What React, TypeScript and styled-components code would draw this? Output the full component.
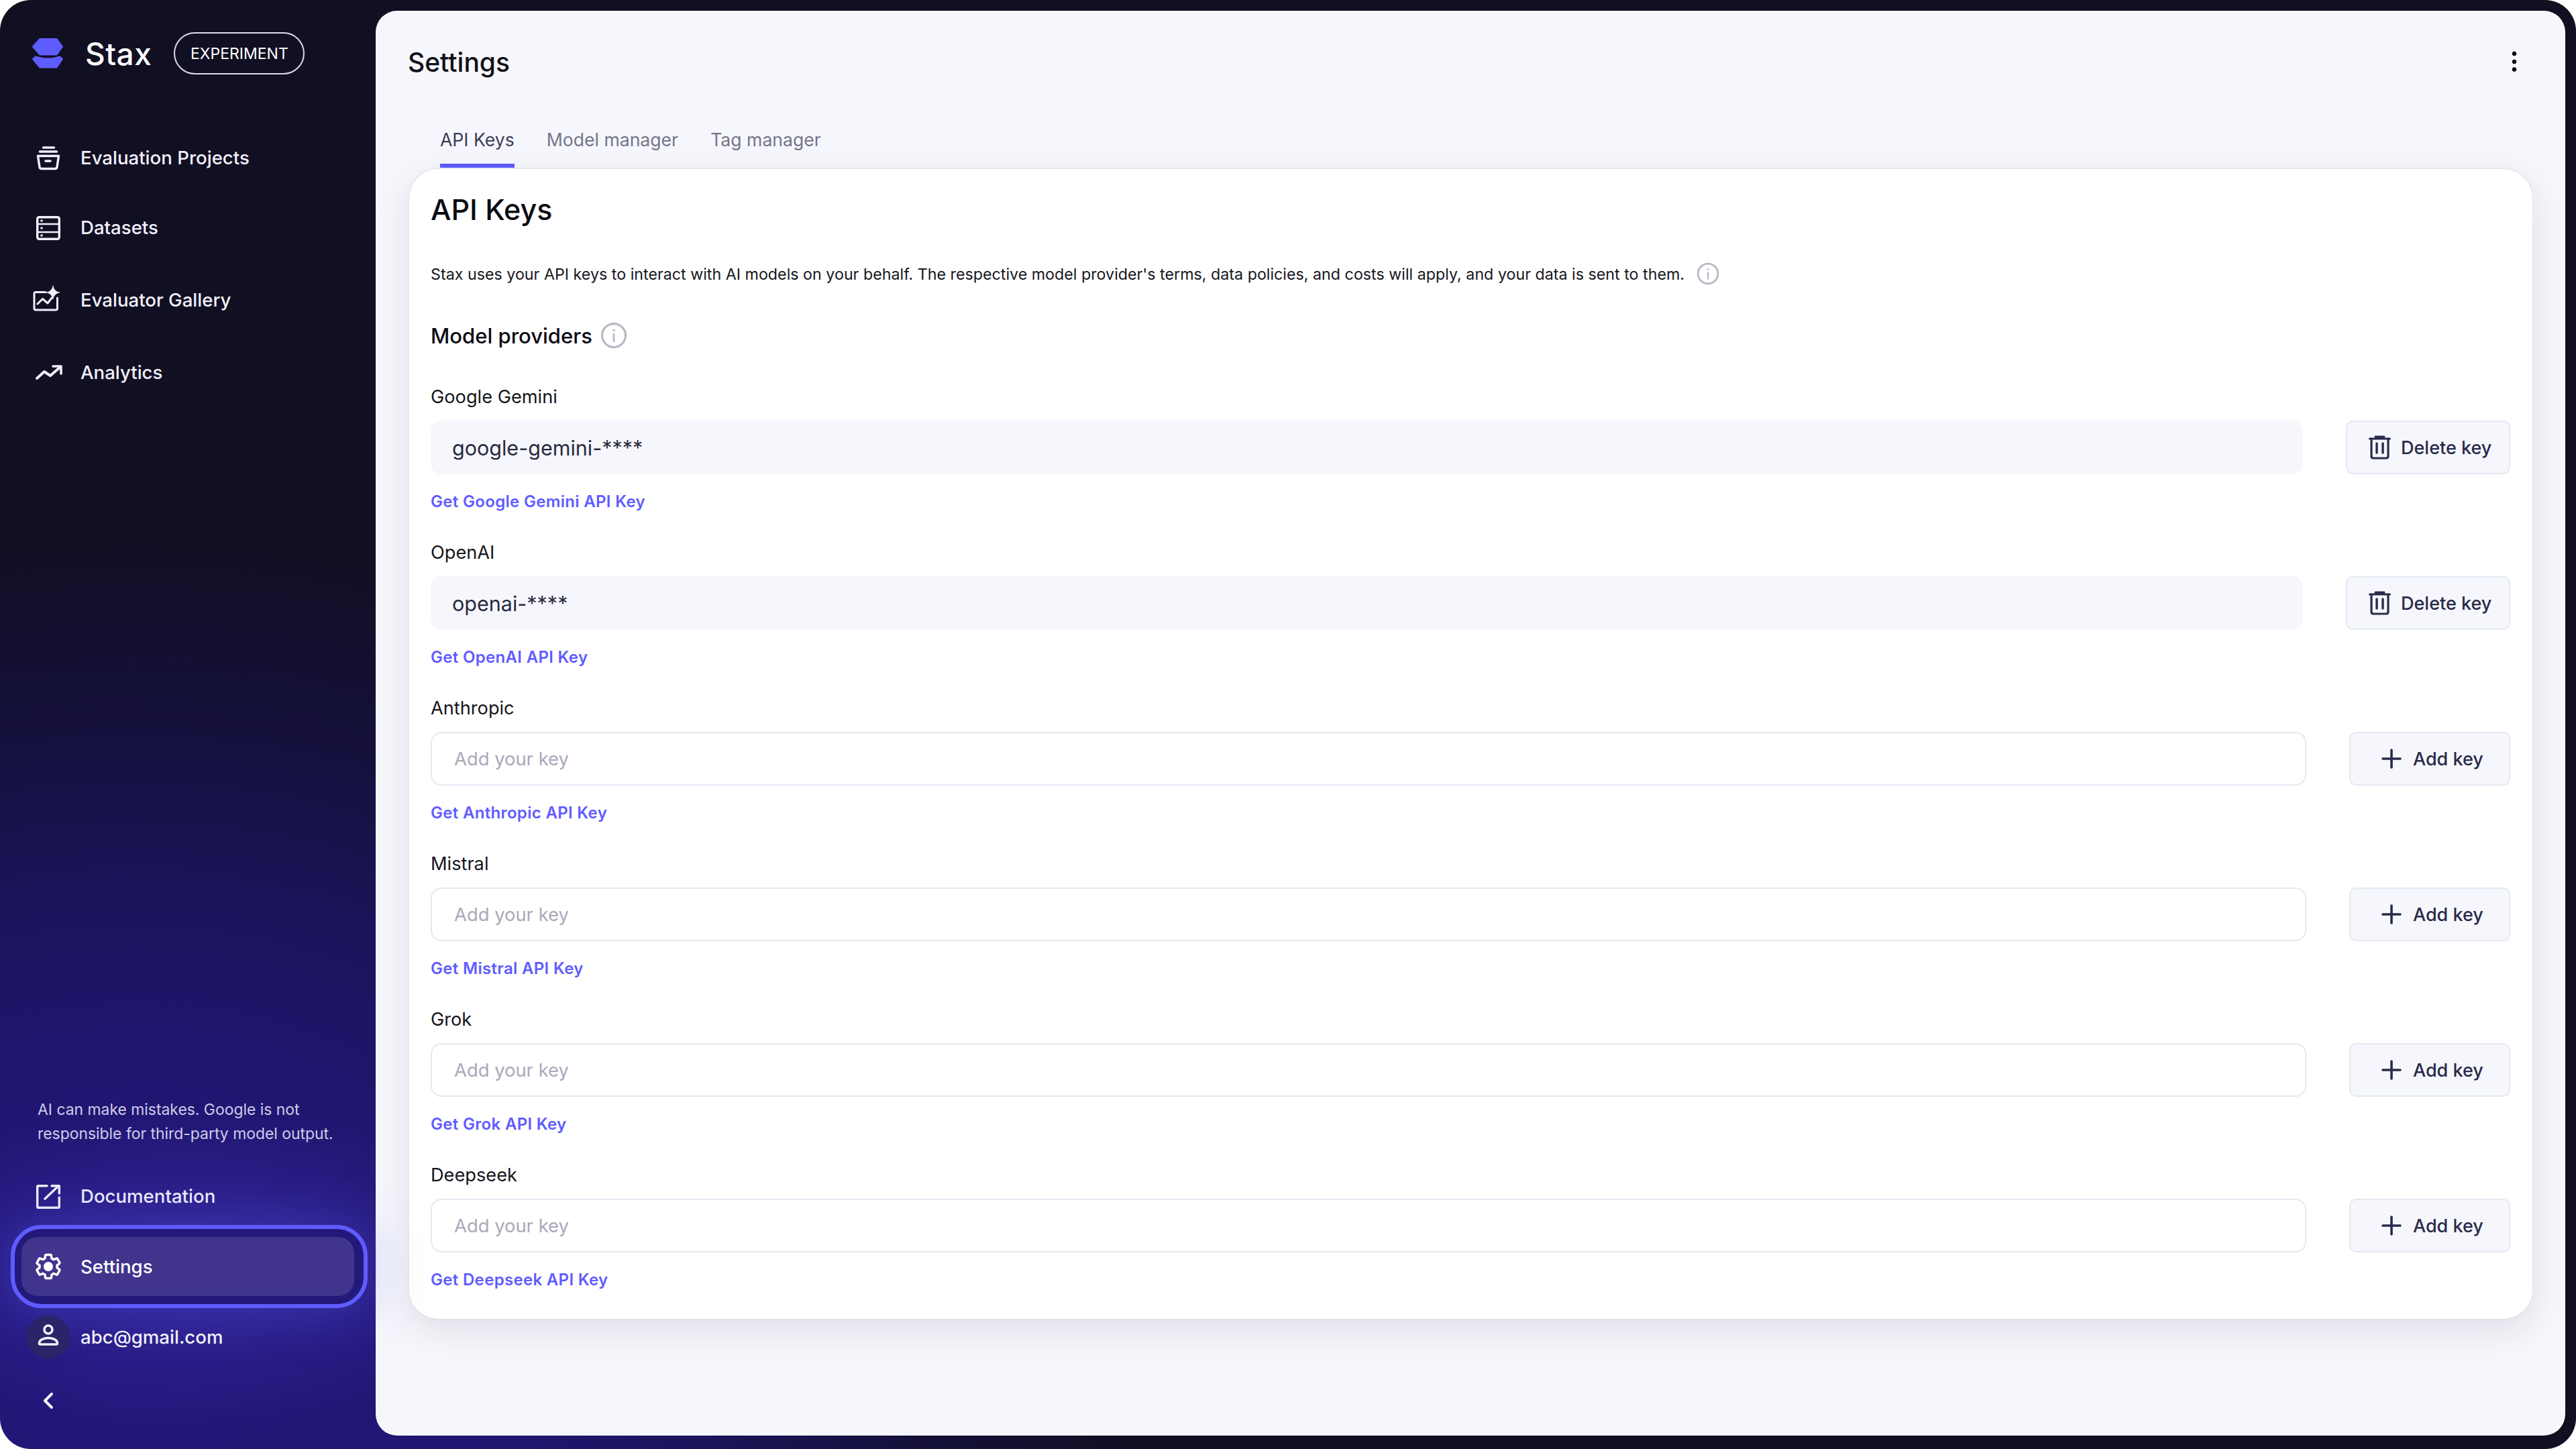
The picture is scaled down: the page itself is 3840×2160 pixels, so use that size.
import { Fragment, type ReactNode } from 'react';
import styled, { createGlobalStyle } from 'styled-components';

const GlobalStyle = createGlobalStyle`
  html, body {
    margin: 0;
    padding: 0;
    background: #ffffff;
    font-family: Inter, "Liberation Sans", sans-serif;
  }
  * {
    box-sizing: border-box;
  }
`;

const Frame = styled.div`
  display: flex;
  width: 3840px;
  height: 2160px;
  border-radius: 46px;
  background:
    radial-gradient(ellipse 520px 240px at 280px 1890px, #33279a 0%, rgba(51, 39, 154, 0) 100%),
    radial-gradient(ellipse 1500px 1260px at 200px 2050px, #22177a 0%, #201670 38%, #1b1459 58%, #14103a 78%, #110f22 100%);
`;

const Sidebar = styled.aside`
  position: relative;
  z-index: 2;
  display: flex;
  flex-direction: column;
  flex: 0 0 560px;
  padding-top: 48px;
  padding-bottom: 48px;
  color: #ffffff;
`;

const LogoRow = styled.div`
  display: flex;
  align-items: center;
  height: 63px;
  padding-left: 40px;
`;

const BrandName = styled.span`
  margin-left: 23px;
  font-size: 46px;
  font-weight: 500;
  letter-spacing: 0.5px;
`;

const Badge = styled.span`
  display: flex;
  align-items: center;
  justify-content: center;
  width: 195px;
  height: 63px;
  margin-left: 33px;
  border: 2px solid #dcdce4;
  border-radius: 32px;
  font-size: 23px;
`;

const NavList = styled.nav`
  display: grid;
  grid-template-rows: 104px 108px 108px 88px;
  margin-top: 80px;
`;

const BottomNav = styled.nav`
  display: grid;
  grid-template-rows: 105px 105px 88px;
`;

const NavItem = styled.div<{ $focused?: boolean }>`
  position: relative;
  z-index: 0;
  display: flex;
  align-items: center;
  gap: 24px;
  width: 496px;
  height: 88px;
  margin-left: 32px;
  padding-left: 16px;
  font-size: 27.6px;
  font-weight: 500;
  color: ${({ $focused }) => ($focused ? '#ffffff' : '#f1effc')};

  ${({ $focused }) =>
    $focused &&
    `
    &::before {
      content: '';
      position: absolute;
      inset: 0;
      z-index: -1;
      border-radius: 24px;
      background: #40348c;
    }
    &::after {
      content: '';
      position: absolute;
      inset: -18px -20px -18px -16px;
      z-index: -2;
      border: 6px solid #5f5cff;
      border-radius: 46px;
      background: #23197a;
      box-shadow: 0 0 80px 6px rgba(95, 92, 255, 0.28);
    }
  `}
`;

const Avatar = styled.span`
  display: flex;
  align-items: center;
  justify-content: center;
  flex: 0 0 64px;
  height: 64px;
  margin: 0 -8px;
  border-radius: 50%;
  background: #2a2468;
`;

const Disclaimer = styled.p`
  margin: auto 0 31px 56px;
  font-size: 22.9px;
  line-height: 36px;
  color: #cfcdea;
`;

const CollapseButton = styled.div`
  display: flex;
  width: 48px;
  height: 48px;
  margin: 27px 0 0 48px;
`;

const Main = styled.main`
  display: flex;
  flex-direction: column;
  flex: 1;
  margin: 16px 16px 20px 0;
  border-radius: 32px;
  background: #f6f7fc;
`;

const Header = styled.header`
  display: flex;
  align-items: center;
  justify-content: space-between;
  height: 48px;
  margin-top: 52px;
  padding: 0 68px 0 48px;
`;

const PageTitle = styled.h1`
  margin: 0;
  font-size: 39px;
  font-weight: 500;
  color: #111118;
`;

const Tabs = styled.div`
  display: flex;
  gap: 48px;
  height: 59px;
  margin: 75px 0 0 96px;
`;

const Tab = styled.div<{ $active?: boolean }>`
  height: 59px;
  border-bottom: 6px solid ${({ $active }) => ($active ? '#5f5cff' : 'transparent')};
  font-size: 26.6px;
  line-height: 35px;
  color: ${({ $active }) => ($active ? '#3c3c5a' : '#74748a')};
`;

const Card = styled.section`
  margin: 0 47px 0 48px;
  padding: 30px 33px 40px 32px;
  border: 2px solid #e8e8ee;
  border-bottom-color: #e2e2e8;
  border-radius: 46px;
  background: #ffffff;
  box-shadow: 0 16px 50px rgba(30, 30, 60, 0.1);
`;

const CardTitle = styled.h2`
  margin: 0;
  font-size: 43px;
  line-height: 60px;
  font-weight: 500;
  color: #0b0b12;
`;

const Description = styled.div`
  display: flex;
  align-items: center;
  gap: 18px;
  height: 36px;
  margin-top: 48px;
  font-size: 23.25px;
  color: #17171f;
`;

const SectionTitle = styled.h3`
  display: flex;
  align-items: center;
  gap: 12px;
  height: 44px;
  margin: 52px 0 0;
  font-size: 31px;
  font-weight: 500;
  color: #0b0b12;
`;

const ProviderList = styled.div`
  display: flex;
  flex-direction: column;
  gap: 39px;
  margin-top: 51px;
`;

const Provider = styled.div`
  display: flex;
  flex-direction: column;
`;

const ProviderName = styled.label`
  height: 38px;
  margin-bottom: 16px;
  font-size: 27.2px;
  line-height: 38px;
  color: #15151c;
`;

const KeyRow = styled.div`
  display: flex;
  gap: 64px;
  height: 80px;
`;

const KeyField = styled.div<{ $filled?: boolean }>`
  display: flex;
  align-items: center;
  flex: 1;
  padding-left: ${({ $filled }) => ($filled ? '30px' : '33px')};
  border: 2px solid ${({ $filled }) => ($filled ? '#f6f7fc' : '#e4e8f2')};
  border-radius: 16px;
  background: ${({ $filled }) => ($filled ? '#f6f7fc' : '#ffffff')};
  font-size: ${({ $filled }) => ($filled ? '30.5px' : '27.4px')};
  color: ${({ $filled }) => ($filled ? '#2a2a40' : '#a9a9b9')};
`;

const KeyButton = styled.button<{ $add?: boolean }>`
  display: flex;
  align-items: center;
  gap: ${({ $add }) => ($add ? '16px' : '14px')};
  width: ${({ $add }) => ($add ? '240px' : '245px')};
  padding: 0 0 0 ${({ $add }) => ($add ? '45px' : '30px')};
  border: 2px solid #e4e8f2;
  border-radius: 10px;
  background: #f6f7fc;
  font-family: inherit;
  font-size: 27px;
  font-weight: 500;
  color: #2a2a4a;
`;

const ProviderLink = styled.a`
  height: 36px;
  margin-top: 23px;
  font-size: 24px;
  font-weight: 600;
  letter-spacing: 0.32px;
  line-height: 36px;
  color: #5f5cff;
`;

const Glyph = styled.svg`
  display: block;
  flex: none;
`;

const NavIcon = ({ children }: { children: ReactNode }) => (
  <Glyph width="48" height="48" viewBox="0 0 48 48" fill="none" stroke="currentColor" strokeLinecap="round" strokeLinejoin="round">
    {children}
  </Glyph>
);

const StaxLogo = () => (
  <Glyph width="64" height="60" viewBox="0 0 64 60" fill="#5f5cff" stroke="#5f5cff" strokeWidth="2" strokeLinejoin="round">
    <path d="M19.5 8 H44.5 L53 19.5 L44.5 31.5 H19.5 L9 19.5 Z" />
    <path d="M13 34.5 Q32 40.5 49.5 34.5 L53 38 L44.5 50.5 H19.5 L9 38 Z" />
  </Glyph>
);

const ProjectsIcon = () => (
  <NavIcon>
    <path d="M16.5 9 H32.5 M11.5 15 H36.5" strokeWidth="3.6" />
    <path d="M8.5 21.5 H39.5 L37 38 Q36.7 40.5 34 40.5 H14 Q11.3 40.5 11 38 Z" strokeWidth="3.4" />
    <path d="M20 29 H27" strokeWidth="3.6" />
  </NavIcon>
);

const DatasetsIcon = () => (
  <NavIcon>
    <rect x="7.7" y="8.7" width="32.6" height="32.6" rx="2.5" strokeWidth="3.4" />
    <path d="M8 19 H40 M8 31 H40" strokeWidth="2.4" />
    <circle cx="14" cy="14" r="1.8" fill="currentColor" stroke="none" />
    <circle cx="14" cy="25" r="1.8" fill="currentColor" stroke="none" />
    <circle cx="14" cy="36" r="1.8" fill="currentColor" stroke="none" />
  </NavIcon>
);

const GalleryIcon = () => (
  <NavIcon>
    <path d="M20 12.5 H5.5 Q3 12.5 3 15 V36.5 Q3 39 5.5 39 H35 Q37.5 39 37.5 36.5 V21" strokeWidth="3" />
    <path d="M8 30 L15.5 22.5 L23 29 L30 20" strokeWidth="3" />
    <path d="M31 3 Q32.5 11.5 41 13 Q32.5 14.5 31 23 Q29.5 14.5 21 13 Q29.5 11.5 31 3Z" fill="currentColor" stroke="currentColor" strokeWidth="0.6" />
  </NavIcon>
);

const AnalyticsIcon = () => (
  <NavIcon>
    <path d="M7 33 L18 23 L27 29 L42 16" strokeWidth="4" />
    <path d="M31 15 H43 V26" strokeWidth="3.6" />
  </NavIcon>
);

const DocsIcon = () => (
  <NavIcon>
    <path d="M22 8.7 H9 Q7.7 8.7 7.7 10 V40 Q7.7 41.3 9 41.3 H39 Q40.3 41.3 40.3 40 V26" strokeWidth="3.4" />
    <path d="M19 28 L38.5 9.5" strokeWidth="3.4" />
    <path d="M29 8.7 H40.3 V20" strokeWidth="3.4" />
  </NavIcon>
);

const GearIcon = () => (
  <Glyph width="48" height="48" viewBox="-1.7 -1.7 27.4 27.4" fill="none" stroke="currentColor" strokeWidth="2">
    <path d="M19.43 12.98c.04-.32.07-.64.07-.98 0-.34-.03-.66-.07-.98l2.11-1.65c.19-.15.24-.42.12-.64l-2-3.46c-.09-.16-.26-.25-.44-.25-.06 0-.12.01-.17.03l-2.49 1c-.52-.4-1.08-.73-1.69-.98l-.38-2.65C14.46 2.18 14.25 2 14 2h-4c-.25 0-.46.18-.49.42l-.38 2.65c-.61.25-1.17.59-1.69.98l-2.49-1c-.06-.02-.12-.03-.18-.03-.17 0-.34.09-.43.25l-2 3.46c-.13.22-.07.49.12.64l2.11 1.65c-.04.32-.07.65-.07.98 0 .33.03.66.07.98l-2.11 1.65c-.19.15-.24.42-.12.64l2 3.46c.09.16.26.25.44.25.06 0 .12-.01.17-.03l2.49-1c.52.4 1.08.73 1.69.98l.38 2.65c.03.24.24.42.49.42h4c.25 0 .46-.18.49-.42l.38-2.65c.61-.25 1.17-.59 1.69-.98l2.49 1c.06.02.12.03.18.03.17 0 .34-.09.43-.25l2-3.46c.12-.22.07-.49-.12-.64l-2.11-1.65z" />
    <circle cx="12" cy="12" r="4" fill="currentColor" stroke="none" />
  </Glyph>
);

const PersonIcon = () => (
  <NavIcon>
    <circle cx="24" cy="13" r="6" strokeWidth="3.5" />
    <path d="M12 35 Q10.5 35 10.5 33.5 C10.5 28 18 25.5 24 25.5 C30 25.5 37.5 28 37.5 33.5 Q37.5 35 36 35 Z" strokeWidth="3.5" />
  </NavIcon>
);

const ChevronIcon = () => (
  <NavIcon>
    <path d="M29 14 L19 24 L29 34" strokeWidth="4" />
  </NavIcon>
);

const KebabIcon = () => (
  <Glyph width="16" height="40" viewBox="0 0 16 40" fill="#0b0b12">
    <circle cx="8" cy="8" r="3.2" />
    <circle cx="8" cy="20" r="3.2" />
    <circle cx="8" cy="31.5" r="3.2" />
  </Glyph>
);

const InfoIcon = ({ size }: { size: number }) => (
  <Glyph width={size} height={size} viewBox="0 0 32 32" fill="none" stroke="#b8b8c8" strokeWidth="2.6" strokeLinecap="round">
    <circle cx="16" cy="16" r="14" />
    <path d="M16 14.5 V23" strokeWidth="2.2" />
    <circle cx="16" cy="9.8" r="1.4" fill="#b8b8c8" stroke="none" />
  </Glyph>
);

const TrashIcon = () => (
  <Glyph width="36" height="40" viewBox="0 0 36 40" fill="none" stroke="currentColor" strokeLinecap="round" strokeLinejoin="round">
    <path d="M3.5 7 H33.5 M12 4 H25" strokeWidth="3" />
    <path d="M6 7 V33 Q6 36 9 36 H28 Q31 36 31 33 V7" strokeWidth="3.2" />
    <path d="M14 14 V28 M23 14 V28" strokeWidth="3.4" />
  </Glyph>
);

const PlusIcon = () => (
  <Glyph width="32" height="32" viewBox="0 0 32 32" fill="none" stroke="currentColor" strokeWidth="3.6" strokeLinecap="round">
    <path d="M16 3 V29 M3 16 H29" />
  </Glyph>
);

const PROVIDERS = [
  { name: 'Google Gemini', value: 'google-gemini-****' },
  { name: 'OpenAI', value: 'openai-****' },
  { name: 'Anthropic' },
  { name: 'Mistral' },
  { name: 'Grok' },
  { name: 'Deepseek' },
];

export default function App() {
  return (
    <Fragment>
      <GlobalStyle />
      <Frame>
        <Sidebar>
          <LogoRow>
            <StaxLogo />
            <BrandName>Stax</BrandName>
            <Badge>EXPERIMENT</Badge>
          </LogoRow>
          <NavList>
            <NavItem>
              <ProjectsIcon />
              Evaluation Projects
            </NavItem>
            <NavItem>
              <DatasetsIcon />
              Datasets
            </NavItem>
            <NavItem>
              <GalleryIcon />
              Evaluator Gallery
            </NavItem>
            <NavItem>
              <AnalyticsIcon />
              Analytics
            </NavItem>
          </NavList>
          <Disclaimer>
            AI can make mistakes. Google is not
            <br />
            responsible for third-party model output.
          </Disclaimer>
          <BottomNav>
            <NavItem>
              <DocsIcon />
              Documentation
            </NavItem>
            <NavItem $focused>
              <GearIcon />
              Settings
            </NavItem>
            <NavItem>
              <Avatar>
                <PersonIcon />
              </Avatar>
              abc@gmail.com
            </NavItem>
          </BottomNav>
          <CollapseButton>
            <ChevronIcon />
          </CollapseButton>
        </Sidebar>
        <Main>
          <Header>
            <PageTitle>Settings</PageTitle>
            <KebabIcon />
          </Header>
          <Tabs>
            <Tab $active>API Keys</Tab>
            <Tab>Model manager</Tab>
            <Tab>Tag manager</Tab>
          </Tabs>
          <Card>
            <CardTitle>API Keys</CardTitle>
            <Description>
              Stax uses your API keys to interact with AI models on your behalf. The respective model provider's terms, data policies, and costs will apply, and your data is sent to them.
              <InfoIcon size={34} />
            </Description>
            <SectionTitle>
              Model providers
              <InfoIcon size={40} />
            </SectionTitle>
            <ProviderList>
              {PROVIDERS.map(({ name, value }) => (
                <Provider key={name}>
                  <ProviderName>{name}</ProviderName>
                  <KeyRow>
                    <KeyField $filled={!!value}>{value ?? 'Add your key'}</KeyField>
                    {value ? (
                      <KeyButton>
                        <TrashIcon />
                        Delete key
                      </KeyButton>
                    ) : (
                      <KeyButton $add>
                        <PlusIcon />
                        Add key
                      </KeyButton>
                    )}
                  </KeyRow>
                  <ProviderLink>Get {name} API Key</ProviderLink>
                </Provider>
              ))}
            </ProviderList>
          </Card>
        </Main>
      </Frame>
    </Fragment>
  );
}
